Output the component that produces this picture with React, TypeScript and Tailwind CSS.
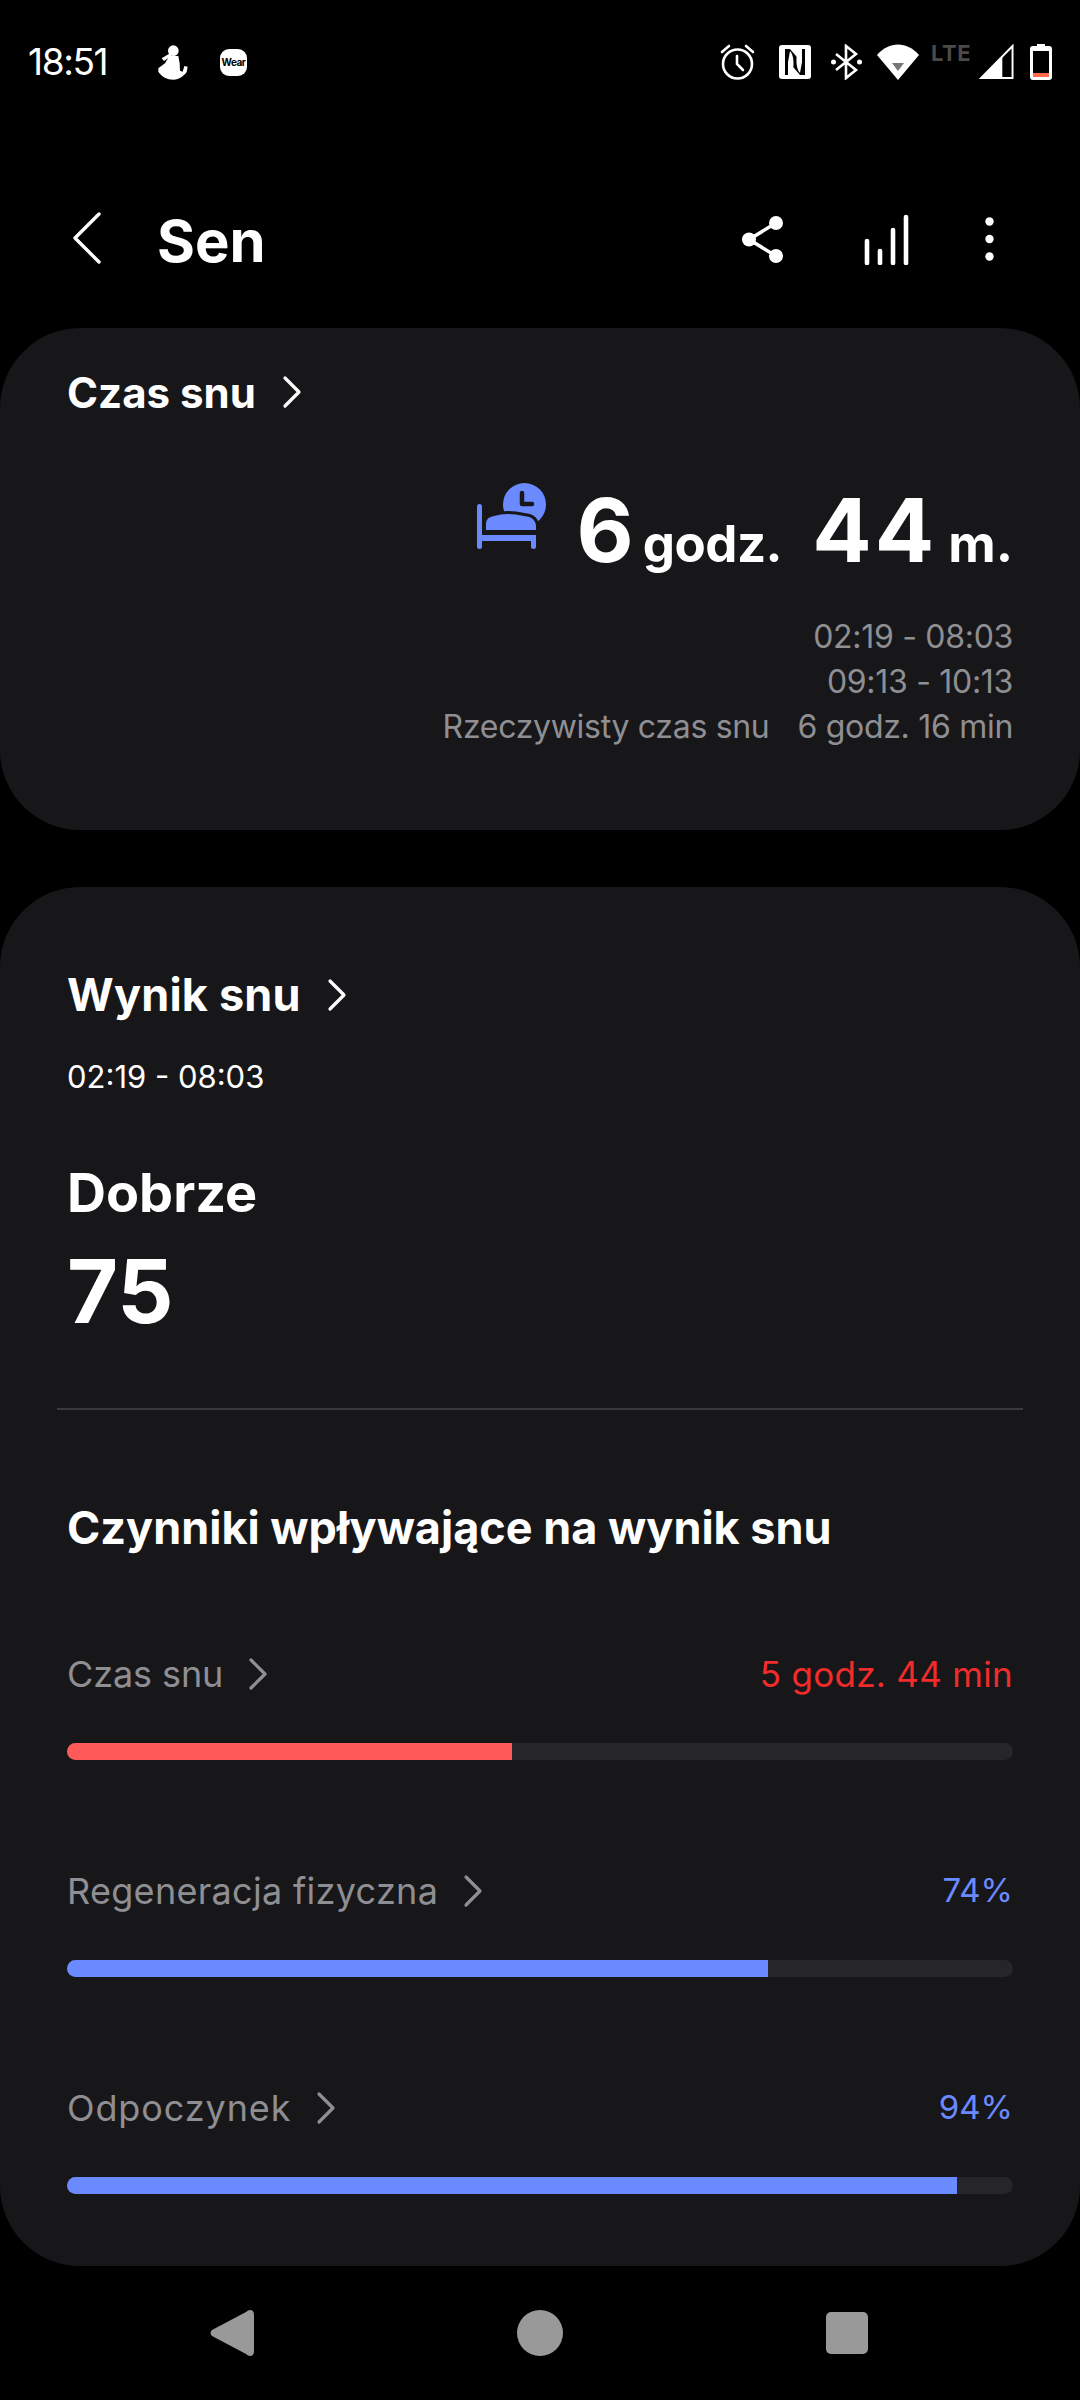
import React from 'react';

const font = { fontFamily: 'Inter, "Noto Sans", sans-serif' };

function Chevron({ className }: { className?: string }) {
  return (
    <svg viewBox="0 0 20 32" className={className} fill="none" stroke="currentColor" strokeWidth="3.2" strokeLinecap="round" strokeLinejoin="round">
      <path d="M3 2 L17 16 L3 30" />
    </svg>
  );
}

function StatusBar() {
  return (
    <div className="h-[124px] flex items-center pl-[28px] pr-[28px] text-white">
      <span className="text-[37px] font-normal tracking-[-1.4px] w-[130px]">18:51</span>
      <svg viewBox="54 45 90 105" className="w-[30px] h-[35px] mr-[32px]" fill="#fff">
        <circle cx="100" cy="62" r="16" />
        <path d="M65 85 L90 70 L94 78 L72 93 Z" />
        <path d="M88 78 H115 L119 100 L120 122 L128 125 L133 108 L143 110 L140 126 C132 138 118 148 100 149 C82 149 64 140 55 125 L55 115 L75 100 Z" />
      </svg>
      <div className="w-[27px] h-[27px] rounded-[9px] bg-white flex items-center justify-center">
        <span className="text-[10px] font-bold text-black tracking-[-0.5px]">Wear</span>
      </div>
      <div className="ml-auto flex items-center">
        <svg viewBox="0 0 35 36" className="w-[35px] h-[36px]" fill="none" stroke="#fff" strokeWidth="2.6" strokeLinecap="round">
          <circle cx="17.5" cy="20" r="14.5" />
          <path d="M17 12 V20 L23 26" />
          <path d="M2 8 L9 2 M33 8 L26 2" />
        </svg>
        <svg viewBox="0 0 32 34" className="w-[32px] h-[34px] ml-[24px]">
          <rect width="32" height="34" rx="3" fill="#fff" />
          <path d="M6 4 H11 L23 18 V4 H26 V30 H21 L9 16 V30 H6 Z" fill="#000" />
          <path d="M11 6 C15 10 15 20 14 24 L9 17 Z M21 28 C17 24 17 14 18 10 L23 17 Z" fill="#fff" />
        </svg>
        <svg viewBox="0 0 31 36" className="w-[31px] h-[36px] ml-[20px]" fill="none" stroke="#fff" strokeWidth="2.6">
          <path d="M5 10 L25 26 L15 34 V2 L25 10 L5 26" />
          <circle cx="2.5" cy="18" r="2.5" fill="#fff" stroke="none" />
          <circle cx="28.5" cy="18" r="2.5" fill="#fff" stroke="none" />
        </svg>
        <svg viewBox="0 0 42 36" className="w-[42px] h-[36px] ml-[15px]">
          <path d="M0 11 C12 -3 30 -3 42 11 L21 36 Z" fill="#fff" />
          <path d="M15 19 H27 L21 27 Z" fill="#777" />
        </svg>
        <div className="w-[41px] h-[36px] ml-[12px] flex items-start">
          <span className="text-[22px] leading-[18px] font-bold text-[#4a4a4a] tracking-[0.5px]">LTE</span>
        </div>
        <svg viewBox="0 0 36 36" className="w-[35px] h-[36px] ml-[7px]">
          <path d="M34.5 1.5 V34.5 H2 Z" fill="none" stroke="#fff" strokeWidth="2" />
          <path d="M24 12 V35 H2 Z" fill="#fff" />
        </svg>
        <svg viewBox="0 0 22 36" className="w-[22px] h-[36px] ml-[16px]">
          <path d="M7 0 H15 V2 H19 Q22 2 22 5 V33 Q22 36 19 36 H3 Q0 36 0 33 V5 Q0 2 3 2 H7 Z" fill="#fff" />
          <rect x="3" y="7" width="16" height="25" fill="#000" />
          <rect x="3" y="29" width="16" height="4" fill="#ff6a4a" />
        </svg>
      </div>
    </div>
  );
}

function Header() {
  return (
    <div className="h-[204px] flex items-center pl-[73px] pt-[34px] pb-[4px] text-white">
      <svg viewBox="0 0 28 52" className="w-[28px] h-[52px] text-white mr-[56px] -mt-[6px]" fill="none" stroke="currentColor" strokeWidth="3.4" strokeLinecap="round" strokeLinejoin="round">
        <path d="M26 2 L2 26 L26 50" />
      </svg>
      <h1 className="text-[58px] font-bold">Sen</h1>
      <div className="ml-auto flex items-center -mt-[4px] mr-[86px]">
        <svg viewBox="0 0 41 47" className="w-[41px] h-[47px]" fill="#fff">
          <circle cx="34" cy="7" r="7" />
          <circle cx="7" cy="23.5" r="7" />
          <circle cx="34" cy="40" r="7" />
          <path d="M34 7 L7 23.5 L34 40" fill="none" stroke="#fff" strokeWidth="3.5" />
        </svg>
        <svg viewBox="0 0 46 51" className="w-[46px] h-[51px] ml-[81px]" fill="none" stroke="#fff" strokeWidth="4.6" strokeLinecap="round">
          <path d="M3 27 V49 M16 37 V49 M29 16 V49 M42 3 V49" />
        </svg>
        <svg viewBox="0 0 9 44" className="w-[9px] h-[44px] ml-[75px]" fill="#fff">
          <circle cx="4.5" cy="4.5" r="4.2" />
          <circle cx="4.5" cy="22" r="4.2" />
          <circle cx="4.5" cy="39.5" r="4.2" />
        </svg>
      </div>
    </div>
  );
}

type FactorProps = { label: string; labelClass: string; value: string; valueClass: string; width: number; color: string };

function Factor({ label, labelClass, value, valueClass, width, color }: FactorProps) {
  return (
    <div className="mb-[110px] last:mb-0">
      <div className="h-[42px] flex items-center justify-between">
        <div className="flex items-center text-[#8f8f93]">
          <span className={`text-[36px] ${labelClass}`}>{label}</span>
          <Chevron className="w-[20px] h-[34px] ml-[25px]" />
        </div>
        <span className={valueClass}>{value}</span>
      </div>
      <div className="mt-[48px] h-[17px] rounded-full bg-[#262628] overflow-hidden">
        <div className={`h-full ${color}`} style={{ width }} />
      </div>
    </div>
  );
}

export default function App() {
  return (
    <div className="w-[1080px] h-[2400px] bg-black overflow-hidden flex flex-col" style={font}>
      <StatusBar />
      <Header />

      <section className="h-[502px] rounded-[80px] bg-[#17171a] pl-[67px] pr-[67px] pt-[42px] text-white">
        <div className="flex items-center h-[44px]">
          <span className="text-[42px] font-bold tracking-[0px]">Czas snu</span>
          <Chevron className="w-[20px] h-[34px] ml-[26px] text-white" />
        </div>
        <div className="mt-[50px] flex items-baseline justify-end h-[104px]">
          <svg viewBox="0 0 69 66" className="w-[69px] h-[66px] mr-[31px] self-center" fill="#6b8aff">
            <circle cx="47.5" cy="21.5" r="21.5" />
            <path d="M9 47 V41 Q9 34 17 33 Q30 29 47 33 Q59 34 59 44 V47 Z" stroke="#17171a" strokeWidth="6" />
            <path d="M9 47 V41 Q9 34 17 33 Q30 29 47 33 Q59 34 59 44 V47 Z" />
            <path d="M45 10 V21 H55" fill="none" stroke="#17171a" strokeWidth="4.5" strokeLinecap="round" strokeLinejoin="round" />
            <rect x="0" y="21" width="5" height="45" rx="2.5" />
            <rect x="0" y="52" width="59" height="6" />
            <rect x="54" y="52" width="5" height="14" rx="2.5" />
          </svg>
          <span className="text-[88px] font-bold">6</span>
          <span className="text-[51px] font-bold ml-[9px] tracking-[-0.5px]">godz.</span>
          <span className="text-[88px] font-bold ml-[30px] tracking-[3px]">44</span>
          <span className="text-[52px] font-bold ml-[11px]">m.</span>
        </div>
        <div className="mt-[46px] text-right text-[32px] tracking-[-0.3px] leading-[45px] text-[#8f8f93]">
          <div>02:19 - 08:03</div>
          <div>09:13 - 10:13</div>
          <div>Rzeczywisty czas snu<span className="ml-[28px]">6 godz. 16 min</span></div>
        </div>
      </section>

      <section className="mt-[57px] h-[1379px] rounded-[80px] bg-[#17171a] pt-[85px] text-white">
        <div className="px-[67px]">
          <div className="flex items-center h-[46px]">
            <span className="text-[45px] font-bold tracking-[0.2px]">Wynik snu</span>
            <Chevron className="w-[20px] h-[34px] ml-[26px] text-white" />
          </div>
          <div className="mt-[39px] text-[31px] leading-[40px]">02:19 - 08:03</div>
          <div className="mt-[64px] text-[54px] leading-[64px] font-bold">Dobrze</div>
          <div className="mt-[16px] text-[88px] leading-[100px] font-bold">75</div>
        </div>
        <div className="mx-[57px] mt-[67px] h-[2px] bg-[#3a3a3c]" />
        <div className="px-[67px]">
          <div className="mt-[94px] mb-[101px] text-[45px] leading-[48px] font-bold tracking-[0px]">Czynniki wpływające na wynik snu</div>
          <Factor label="Czas snu" labelClass="tracking-[-0.1px]" value="5 godz. 44 min" valueClass="text-[35px] tracking-[0.3px] text-[#f22b2b]" width={445} color="bg-[#ff5a5a]" />
          <Factor label="Regeneracja fizyczna" labelClass="tracking-[0.3px]" value="74%" valueClass="text-[33px] text-[#6b8aff]" width={701} color="bg-[#6b8aff]" />
          <Factor label="Odpoczynek" labelClass="tracking-[0.9px]" value="94%" valueClass="text-[33px] text-[#6b8aff]" width={890} color="bg-[#6b8aff]" />
        </div>
      </section>

      <nav className="flex-1 flex items-center">
        <svg viewBox="0 0 44 48" className="w-[44px] h-[48px] ml-[210px]" fill="#999">
          <path d="M40 1 Q44 1 44 6 V42 Q44 47 40 47 Q38 47 36 45 L2 27 Q-1 24 2 21 L36 3 Q38 1 40 1 Z" />
        </svg>
        <div className="w-[46px] h-[46px] rounded-full bg-[#999] ml-[263px]" />
        <div className="w-[42px] h-[42px] rounded-[5px] bg-[#999] ml-[263px]" />
      </nav>
    </div>
  );
}
